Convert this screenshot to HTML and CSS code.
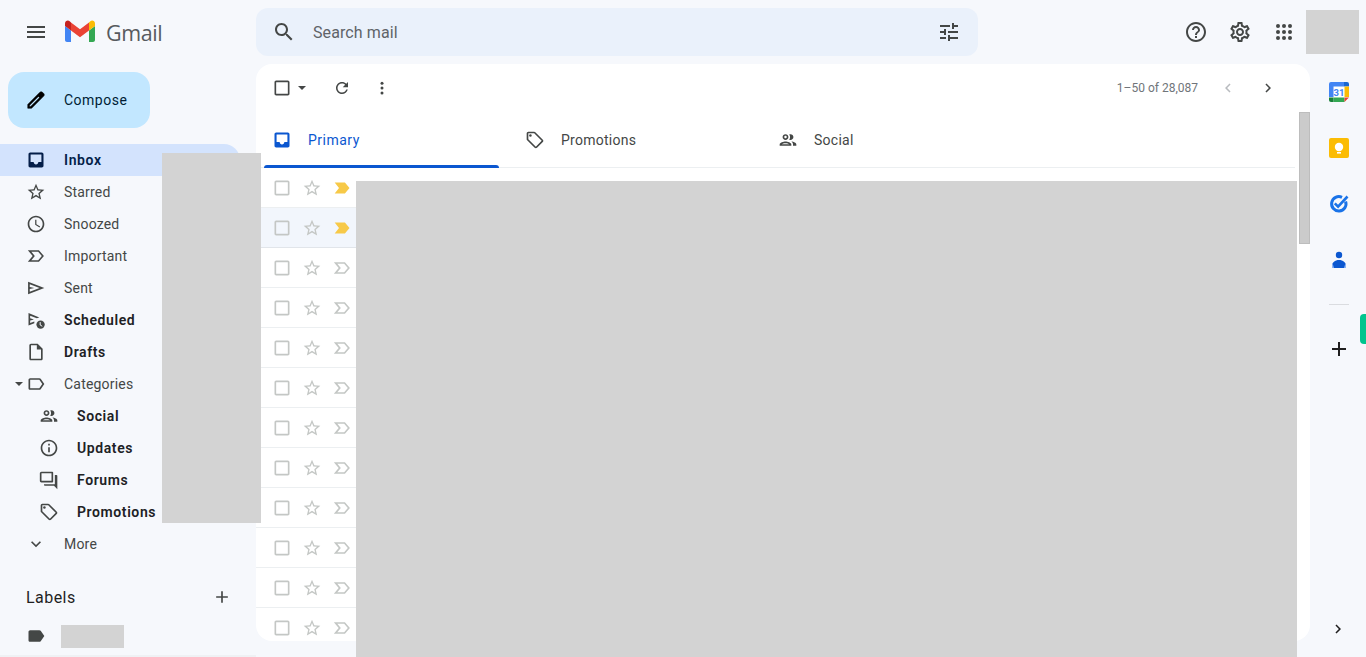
FILE: index.html
```html
<!DOCTYPE html>
<html lang="en">
<head>
  <meta charset="UTF-8">
  <meta name="viewport" content="width=device-width, initial-scale=1.0">
  <title>Inbox - Gmail</title>
  <link rel="stylesheet" href="styles.css">
</head>
<body>
  <svg class="defs" width="0" height="0">
    <symbol id="i-inbox" viewBox="0 0 24 24"><path d="M19 3H5c-1.1 0-2 .9-2 2v14c0 1.1.9 2 2 2h14c1.1 0 2-.9 2-2V5c0-1.1-.9-2-2-2zm-.5 11.500h-3.700c0 1.500-1.300 2.800-2.800 2.800s-2.800-1.300-2.800-2.800H5.500v-9h13v9z"/></symbol>
    <symbol id="i-star" viewBox="0 0 24 24"><path d="M22 9.24l-7.19-.62L12 2 9.19 8.63 2 9.24l5.46 4.73L5.82 21 12 17.27 18.18 21l-1.63-7.03L22 9.24zM12 15.4l-3.76 2.27 1-4.28-3.32-2.88 4.38-.38L12 6.1l1.71 4.04 4.38.38-3.32 2.88 1 4.28L12 15.4z"/></symbol>
    <symbol id="i-clock" viewBox="0 0 24 24"><path d="M11.99 2C6.47 2 2 6.48 2 12s4.47 10 9.99 10C17.52 22 22 17.52 22 12S17.52 2 11.99 2zM12 20c-4.42 0-8-3.58-8-8s3.58-8 8-8 8 3.58 8 8-3.58 8-8 8zm.5-13H11v6l5.25 3.15.75-1.23-4.5-2.67V7z"/></symbol>
    <symbol id="i-important" viewBox="0 0 24 24"><path d="M15.5 5H2.2L8 12l-5.800 7h13.300L21.500 12z M6.400 17L10.600 12 6.400 7h8.200L19 12l-4.400 5z" fill-rule="evenodd"/></symbol>
    <symbol id="i-sent" viewBox="0 0 24 24"><path d="M2.500 4.500v15L22 12 2.500 4.500zm2 3l11.800 4.500-11.800 4.500v-3.200l5.500-1.300-5.500-1.300V7.500z" fill-rule="evenodd"/></symbol>
    <symbol id="i-file" viewBox="0 0 24 24"><path d="M14 2H6c-1.1 0-2 .9-2 2v16c0 1.1.9 2 2 2h12c1.1 0 2-.9 2-2V8l-6-6zm4 18H6V4h7v5h5v11z"/></symbol>
    <symbol id="i-label" viewBox="0 0 24 24"><path d="M17.63 5.84C17.27 5.33 16.67 5 16 5L5 5.01C3.9 5.01 3 5.9 3 7v10c0 1.1.9 1.99 2 1.99L16 19c.67 0 1.27-.33 1.63-.84L22 12l-4.37-6.16zM16 17H5V7h11l3.55 5L16 17z"/></symbol>
    <symbol id="i-people" viewBox="0 0 24 24"><path d="M9 13.75c-2.34 0-7 1.17-7 3.5V19h14v-1.75c0-2.33-4.66-3.5-7-3.5zM4.34 17c.84-.58 2.87-1.25 4.66-1.25s3.82.67 4.66 1.25H4.34zM9 12c1.93 0 3.5-1.57 3.5-3.5S10.93 5 9 5 5.5 6.57 5.5 8.5 7.07 12 9 12zm0-5c.83 0 1.5.67 1.5 1.5S9.83 10 9 10s-1.5-.67-1.5-1.5S8.17 7 9 7zm7.04 6.81c1.16.84 1.96 1.96 1.96 3.44V19h4v-1.75c0-2.02-3.5-3.17-5.96-3.44zM15 12c1.93 0 3.5-1.57 3.5-3.5S16.93 5 15 5c-.54 0-1.04.13-1.5.35.63.89 1 1.98 1 3.15s-.37 2.26-1 3.15c.46.22.96.35 1.5.35z"/></symbol>
    <symbol id="i-info" viewBox="0 0 24 24"><path d="M11 7h2v2h-2zm0 4h2v6h-2zm1-9C6.48 2 2 6.48 2 12s4.48 10 10 10 10-4.48 10-10S17.52 2 12 2zm0 18c-4.41 0-8-3.59-8-8s3.59-8 8-8 8 3.59 8 8-3.59 8-8 8z"/></symbol>
    <symbol id="i-forum" viewBox="0 0 24 24"><path d="M15 4v9H3V4h12m1-2H3c-1.100 0-2 .9-2 2v9c0 1.100.9 2 2 2h13c.55 0 1-.45 1-1V3c0-.55-.45-1-1-1zm5 4h-2v11H6v1c0 .55.45 1 1 1h11l4 4V7c0-.55-.45-1-1-1z"/></symbol>
    <symbol id="i-tag" viewBox="0 0 24 24"><path d="M21.41 11.58l-9-9C12.05 2.22 11.55 2 11 2H4c-1.1 0-2 .9-2 2v7c0 .55.22 1.05.59 1.42l9 9c.36.36.86.58 1.41.58s1.05-.22 1.41-.59l7-7c.37-.36.59-.86.59-1.41s-.23-1.06-.59-1.42zM13 20.01L4 11V4h7v-.01l9 9-7 7.02z"/><circle cx="6.5" cy="6.5" r="1.5"/></symbol>
    <symbol id="i-check" viewBox="0 0 24 24"><path d="M19 5v14H5V5h14m0-2H5c-1.1 0-2 .9-2 2v14c0 1.1.9 2 2 2h14c1.1 0 2-.9 2-2V5c0-1.1-.9-2-2-2z"/></symbol>
    <symbol id="i-tagged" viewBox="0 0 24 24"><path d="M3.2 5.500h12.300L21 12l-5.500 6.500H3.200L8.400 12z"/></symbol>
  </svg>

  <div class="app">
    <aside class="sidebar">
      <div class="brand">
        <svg class="icon menu-btn" viewBox="0 0 24 24"><path d="M3 18h18v-2H3v2zm0-5h18v-2H3v2zm0-7v2h18V6H3z"/></svg>
        <svg class="gmail-logo" width="30" height="24" viewBox="0 0 30 24">
          <path fill="#4285f4" d="M2 22h4V10.500L0 6v14c0 1.100.9 2 2 2z"/>
          <path fill="#34a853" d="M24 22h4c1.100 0 2-.9 2-2V6l-6 4.500z"/>
          <path fill="#fbbc04" d="M24 2.500v8L30 6V3.500C30 1 27.200-.3 25.300 1.200z"/>
          <path fill="#ea4335" d="M6 10.500v-8L15 9.300l9-6.800v8l-9 6.700z"/>
          <path fill="#c5221f" d="M0 3.500V6l6 4.500v-8L4.700 1.200C2.800-.3 0 1 0 3.500z"/>
        </svg>
        <span class="wordmark">Gmail</span>
      </div>

      <button class="compose">
        <svg class="icon" viewBox="0 0 24 24"><path d="M20.410 4.940l-1.350-1.350c-.78-.78-2.050-.78-2.830 0L3 16.820V21h4.180L20.410 7.770c.79-.78.79-2.050 0-2.830zM6.290 19H5v-1.290l9.550-9.550 1.290 1.290L6.290 19z"/></svg>
        <span>Compose</span>
      </button>

      <nav class="nav">
        <a class="nav-item active bold"><svg class="icon"><use href="#i-inbox"/></svg><span>Inbox</span></a>
        <a class="nav-item"><svg class="icon"><use href="#i-star"/></svg><span>Starred</span></a>
        <a class="nav-item"><svg class="icon"><use href="#i-clock"/></svg><span>Snoozed</span></a>
        <a class="nav-item"><svg class="icon"><use href="#i-important"/></svg><span>Important</span></a>
        <a class="nav-item"><svg class="icon"><use href="#i-sent"/></svg><span>Sent</span></a>
        <a class="nav-item bold">
          <svg class="icon" viewBox="0 0 24 24"><path d="M3 3.500v15l7-2.700v-2.100L5 15.500v-3l4.500-1.200L5 10V6.800l8 3.100 3-1z" fill-rule="evenodd"/><circle cx="17.500" cy="17.500" r="5"/><path d="M17 14.500V18l2.500 1.500" fill="none" stroke="#f6f8fc" stroke-width="1.200"/></svg>
          <span>Scheduled</span>
        </a>
        <a class="nav-item bold"><svg class="icon"><use href="#i-file"/></svg><span>Drafts</span></a>
        <a class="nav-item">
          <i class="caret"></i>
          <svg class="icon"><use href="#i-label"/></svg><span>Categories</span>
        </a>
        <a class="nav-item sub bold"><svg class="icon"><use href="#i-people"/></svg><span>Social</span></a>
        <a class="nav-item sub bold"><svg class="icon"><use href="#i-info"/></svg><span>Updates</span></a>
        <a class="nav-item sub bold"><svg class="icon"><use href="#i-forum"/></svg><span>Forums</span></a>
        <a class="nav-item sub bold"><svg class="icon"><use href="#i-tag"/></svg><span>Promotions</span></a>
        <a class="nav-item">
          <svg class="icon" viewBox="0 0 24 24"><path d="M16.590 8.590L12 13.170 7.410 8.590 6 10l6 6 6-6z"/></svg>
          <span>More</span>
        </a>
      </nav>

      <div class="labels-head">
        <span>Labels</span>
        <svg class="icon" viewBox="0 0 24 24"><path d="M19 13h-6v6h-2v-6H5v-2h6V5h2v6h6v2z"/></svg>
      </div>
      <div class="label-row">
        <svg class="icon" viewBox="0 0 24 24"><path d="M17.630 5.840C17.270 5.330 16.670 5 16 5L5 5.010C3.900 5.010 3 5.900 3 7v10c0 1.100.9 1.990 2 1.990L16 19c.67 0 1.270-.33 1.630-.84L22 12l-4.370-6.160z"/></svg>
      </div>
    </aside>

    <div class="center">
      <header class="topbar">
        <div class="search">
          <svg class="icon" viewBox="0 0 24 24"><path d="M15.500 14h-.79l-.28-.27C15.410 12.590 16 11.110 16 9.500 16 5.910 13.090 3 9.500 3S3 5.910 3 9.500 5.910 16 9.500 16c1.610 0 3.090-.59 4.230-1.570l.27.28v.79l5 4.990L20.490 19l-4.990-5zm-6 0C7.010 14 5 11.990 5 9.500S7.010 5 9.500 5 14 7.010 14 9.500 11.990 14 9.500 14z"/></svg>
          <span class="search-text">Search mail</span>
          <svg class="icon" viewBox="0 0 24 24"><path d="M3 17v2h6v-2H3zM3 5v2h10V5H3zm10 16v-2h8v-2h-8v-2h-2v6h2zM7 9v2H3v2h4v2h2V9H7zm14 4v-2H11v2h10zm-6-4h2V7h4V5h-4V3h-2v6z"/></svg>
        </div>
        <div class="top-actions">
          <svg class="icon" viewBox="0 0 24 24"><path d="M11 18h2v-2h-2v2zm1-16C6.480 2 2 6.480 2 12s4.480 10 10 10 10-4.480 10-10S17.520 2 12 2zm0 18c-4.410 0-8-3.590-8-8s3.590-8 8-8 8 3.590 8 8-3.590 8-8 8zm0-14c-2.210 0-4 1.790-4 4h2c0-1.100.9-2 2-2s2 .9 2 2c0 2-3 1.750-3 5h2c0-2.250 3-2.500 3-5 0-2.210-1.790-4-4-4z"/></svg>
          <svg class="icon" viewBox="0 0 24 24"><path d="M19.430 12.980c.04-.32.07-.64.07-.98 0-.34-.03-.66-.07-.98l2.110-1.650c.19-.15.24-.42.12-.64l-2-3.460c-.09-.16-.26-.25-.44-.25-.06 0-.12.01-.17.03l-2.490 1c-.52-.4-1.080-.73-1.690-.98l-.38-2.650C14.460 2.180 14.250 2 14 2h-4c-.25 0-.46.18-.49.42l-.38 2.650c-.61.25-1.170.59-1.690.98l-2.490-1c-.06-.02-.12-.03-.18-.03-.17 0-.34.09-.43.25l-2 3.460c-.13.22-.07.49.12.64l2.110 1.650c-.04.32-.07.65-.07.98 0 .33.03.66.07.98l-2.110 1.650c-.19.15-.24.42-.12.64l2 3.460c.09.16.26.25.44.25.06 0 .12-.01.17-.03l2.490-1c.52.4 1.080.73 1.690.98l.38 2.650c.03.24.24.42.49.42h4c.25 0 .46-.18.49-.42l.38-2.650c.61-.25 1.170-.59 1.690-.98l2.490 1c.06.02.12.03.18.03.17 0 .34-.09.43-.25l2-3.460c.12-.22.07-.49-.12-.64l-2.110-1.650zm-1.980-1.710c.04.31.05.52.05.73 0 .21-.02.43-.05.73l-.14 1.130.89.7 1.080.84-.7 1.210-1.270-.51-1.040-.42-.9.68c-.43.32-.84.56-1.250.73l-1.060.43-.16 1.130-.2 1.350h-1.400l-.19-1.350-.16-1.130-1.060-.43c-.43-.18-.83-.41-1.230-.71l-.91-.7-1.060.43-1.270.51-.7-1.210 1.080-.84.89-.7-.14-1.130c-.03-.31-.05-.54-.05-.74s.02-.43.05-.73l.14-1.130-.89-.7-1.080-.84.7-1.210 1.270.51 1.040.42.9-.68c.43-.32.84-.56 1.250-.73l1.060-.43.16-1.130.2-1.350h1.390l.19 1.350.16 1.130 1.060.43c.43.18.83.41 1.230.71l.91.7 1.060-.43 1.270-.51.7 1.210-1.070.85-.89.7.14 1.130zM12 8c-2.210 0-4 1.790-4 4s1.790 4 4 4 4-1.790 4-4-1.790-4-4-4zm0 6c-1.100 0-2-.9-2-2s.9-2 2-2 2 .9 2 2-.9 2-2 2z"/></svg>
          <svg class="icon" viewBox="0 0 24 24"><circle cx="6" cy="6" r="2"/><circle cx="12" cy="6" r="2"/><circle cx="18" cy="6" r="2"/><circle cx="6" cy="12" r="2"/><circle cx="12" cy="12" r="2"/><circle cx="18" cy="12" r="2"/><circle cx="6" cy="18" r="2"/><circle cx="12" cy="18" r="2"/><circle cx="18" cy="18" r="2"/></svg>
        </div>
      </header>

      <main class="panel">
        <div class="toolbar">
          <svg class="icon"><use href="#i-check"/></svg>
          <i class="caret toolbar-caret"></i>
          <svg class="icon small refresh" viewBox="0 0 24 24"><path d="M17.650 6.350C16.200 4.900 14.210 4 12 4c-4.420 0-7.990 3.580-7.990 8s3.570 8 7.990 8c3.730 0 6.840-2.550 7.730-6h-2.080c-.82 2.330-3.040 4-5.650 4-3.310 0-6-2.690-6-6s2.690-6 6-6c1.660 0 3.140.69 4.220 1.780L13 11h7V4l-2.350 2.350z"/></svg>
          <svg class="icon small more" viewBox="0 0 24 24"><circle cx="12" cy="5.500" r="2"/><circle cx="12" cy="12" r="2"/><circle cx="12" cy="18.500" r="2"/></svg>
          <div class="pager">
            <span>1–50 of 28,087</span>
            <svg class="icon small disabled" viewBox="0 0 24 24"><path d="M15.410 7.410L14 6l-6 6 6 6 1.410-1.410L10.830 12z"/></svg>
            <svg class="icon small" viewBox="0 0 24 24"><path d="M10 6L8.590 7.410 13.170 12l-4.580 4.590L10 18l6-6z"/></svg>
          </div>
        </div>

        <div class="tabs">
          <div class="tab selected"><svg class="icon"><use href="#i-inbox"/></svg><span>Primary</span></div>
          <div class="tab"><svg class="icon"><use href="#i-tag"/></svg><span>Promotions</span></div>
          <div class="tab"><svg class="icon"><use href="#i-people"/></svg><span>Social</span></div>
        </div>

        <div class="rows">
          <div class="row"><svg class="icon"><use href="#i-check"/></svg><svg class="icon"><use href="#i-star"/></svg><svg class="icon tagged"><use href="#i-tagged"/></svg></div>
          <div class="row hover"><svg class="icon"><use href="#i-check"/></svg><svg class="icon"><use href="#i-star"/></svg><svg class="icon tagged"><use href="#i-tagged"/></svg></div>
          <div class="row"><svg class="icon"><use href="#i-check"/></svg><svg class="icon"><use href="#i-star"/></svg><svg class="icon"><use href="#i-important"/></svg></div>
          <div class="row"><svg class="icon"><use href="#i-check"/></svg><svg class="icon"><use href="#i-star"/></svg><svg class="icon"><use href="#i-important"/></svg></div>
          <div class="row"><svg class="icon"><use href="#i-check"/></svg><svg class="icon"><use href="#i-star"/></svg><svg class="icon"><use href="#i-important"/></svg></div>
          <div class="row"><svg class="icon"><use href="#i-check"/></svg><svg class="icon"><use href="#i-star"/></svg><svg class="icon"><use href="#i-important"/></svg></div>
          <div class="row"><svg class="icon"><use href="#i-check"/></svg><svg class="icon"><use href="#i-star"/></svg><svg class="icon"><use href="#i-important"/></svg></div>
          <div class="row"><svg class="icon"><use href="#i-check"/></svg><svg class="icon"><use href="#i-star"/></svg><svg class="icon"><use href="#i-important"/></svg></div>
          <div class="row"><svg class="icon"><use href="#i-check"/></svg><svg class="icon"><use href="#i-star"/></svg><svg class="icon"><use href="#i-important"/></svg></div>
          <div class="row"><svg class="icon"><use href="#i-check"/></svg><svg class="icon"><use href="#i-star"/></svg><svg class="icon"><use href="#i-important"/></svg></div>
          <div class="row"><svg class="icon"><use href="#i-check"/></svg><svg class="icon"><use href="#i-star"/></svg><svg class="icon"><use href="#i-important"/></svg></div>
          <div class="row"><svg class="icon"><use href="#i-check"/></svg><svg class="icon"><use href="#i-star"/></svg><svg class="icon"><use href="#i-important"/></svg></div>
        </div>

        <div class="scroll-thumb"></div>
      </main>
    </div>

    <aside class="addons">
      <svg class="addon" viewBox="0 0 20 20">
        <rect x="1" y="1" width="18" height="18" rx="1.500" fill="#fff"/>
        <path fill="#4285f4" d="M2 0h13v4.500H4.500V15H0V2a2 2 0 0 1 2-2z"/>
        <path fill="#1967d2" d="M15 0h3a2 2 0 0 1 2 2v2.500h-5z"/>
        <path fill="#fbbc04" d="M15.500 4.500H20V15h-4.500z"/>
        <path fill="#34a853" d="M4.500 15.500H15.500V20H4.500z"/>
        <path fill="#188038" d="M0 15.500h4.500V20H2a2 2 0 0 1-2-2z"/>
        <path fill="#ea4335" d="M15.500 15.500H20L15.500 20z"/>
        <text x="10" y="13.500" text-anchor="middle" class="cal-num">31</text>
      </svg>
      <svg class="addon" viewBox="0 0 20 20">
        <rect width="20" height="20" rx="2" fill="#fbbc04"/>
        <circle cx="10" cy="9" r="4.200" fill="#fff"/>
        <rect x="8" y="14" width="4" height="1.600" fill="#fff"/>
      </svg>
      <svg class="addon" viewBox="0 0 20 20">
        <path fill="none" stroke="#1a73e8" stroke-width="3" d="M16.600 7.500A7.200 7.200 0 1 1 13 3.400"/>
        <path fill="none" stroke="#1a73e8" stroke-width="2.600" d="M5.800 9.300l3.300 3.300L18.500 2.500"/>
      </svg>
      <svg class="addon" viewBox="0 0 20 20">
        <circle cx="10" cy="5" r="3.200" fill="#0b57d0"/>
        <path fill="#0b57d0" d="M3 18v-2.500C3 12.500 6 10 10 10s7 2.500 7 5.500V18z"/>
        <path fill="#8ab4f8" d="M3 18v-2.500c0-.8.2-1.500.6-2.200L5 18zM17 18v-2.500c0-.8-.2-1.500-.6-2.200L15 18z"/>
      </svg>
      <div class="addon-sep"></div>
      <svg class="icon plus" viewBox="0 0 24 24"><path d="M19 13h-6v6h-2v-6H5v-2h6V5h2v6h6v2z"/></svg>
      <svg class="icon expand" viewBox="0 0 24 24"><path d="M10 6L8.590 7.410 13.170 12l-4.580 4.590L10 18l6-6z"/></svg>
      <div class="addon-pill"></div>
    </aside>
  </div>

  <!-- grey blocks over private content -->
  <div class="mask mask-counts"></div>
  <div class="mask mask-list"></div>
  <div class="mask mask-avatar"></div>
  <div class="mask mask-label"></div>
</body>
</html>
```

FILE: styles.css
```css
* {
  box-sizing: border-box;
}

html, body {
  height: 100%;
}

body {
  margin: 0;
  overflow: hidden;
  font-family: Roboto, "Liberation Sans", sans-serif;
  background-color: #f6f8fc;
  color: #444746;
}

.defs {
  position: absolute;
}

.icon {
  width: 20px;
  height: 20px;
  flex: none;
  fill: #444746;
}

.app {
  display: flex;
  height: 657px;
}

/* left column */
.sidebar {
  width: 256px;
  flex: none;
  border-bottom: 2px solid #eff1f4;
}

.brand {
  display: flex;
  align-items: center;
  height: 64px;
  padding-left: 24px;
}

.menu-btn {
  width: 24px;
  height: 24px;
}

.gmail-logo {
  margin-left: 17px;
}

.wordmark {
  margin-left: 11px;
  font-family: "Open Sans", Roboto, sans-serif;
  font-size: 21.5px;
  letter-spacing: -0.4px;
  color: #565a5e;
}

.compose {
  display: flex;
  align-items: center;
  gap: 17px;
  width: 142px;
  height: 56px;
  margin: 8px 0 16px 8px;
  padding: 0 0 0 17px;
  border: none;
  border-radius: 16px;
  background-color: #c2e7ff;
  font-family: inherit;
  font-size: 14px;
  font-weight: 400;
  letter-spacing: 0.5px;
  color: #001d35;
}

.compose .icon {
  width: 22px;
  height: 22px;
  fill: #000;
  stroke: #000;
  stroke-width: 0.6;
}

.nav-item {
  position: relative;
  display: flex;
  align-items: center;
  gap: 18px;
  height: 32px;
  width: 240px;
  padding-left: 26px;
  font-size: 14px;
  letter-spacing: 0.2px;
  color: #444746;
}

.nav-item.active {
  background-color: #d3e3fd;
  border-radius: 0 16px 16px 0;
}

.nav-item.active .icon {
  fill: #041e49;
}

.nav-item.bold {
  font-weight: 600;
  letter-spacing: 0.6px;
  color: #202124;
}

.nav-item.active.bold {
  color: #041e49;
}

.nav-item.sub {
  padding-left: 39px;
}

.caret {
  position: absolute;
  left: 15px;
  top: 14px;
  border: 4px solid transparent;
  border-top-color: #444746;
  border-bottom: none;
}

.labels-head {
  display: flex;
  align-items: center;
  justify-content: space-between;
  width: 240px;
  height: 24px;
  margin-top: 25px;
  padding: 0 8px 0 26px;
  font-size: 16px;
  letter-spacing: 0.45px;
  color: #1f1f1f;
}

.label-row {
  display: flex;
  align-items: center;
  height: 32px;
  margin-top: 11px;
  padding-left: 26px;
}

/* top bar */
.center {
  flex: 1;
  min-width: 0;
  display: flex;
  flex-direction: column;
}

.topbar {
  display: flex;
  align-items: center;
  height: 64px;
  flex: none;
}

.search {
  display: flex;
  align-items: center;
  width: 722px;
  height: 48px;
  padding: 0 17px 0 16px;
  border-radius: 12px;
  background-color: #eaf1fb;
}

.search .icon {
  width: 24px;
  height: 24px;
}

.search-text {
  flex: 1;
  margin-left: 17px;
  font-size: 16px;
  letter-spacing: 0.1px;
  color: #5f6368;
}

.top-actions {
  display: flex;
  align-items: center;
  gap: 20px;
  margin-left: auto;
  margin-right: 14px;
}

.top-actions .icon {
  width: 24px;
  height: 24px;
}

/* mail panel */
.panel {
  position: relative;
  height: 577px;
  flex: none;
  border-radius: 16px;
  background-color: #fff;
  overflow: hidden;
}

.toolbar {
  display: flex;
  align-items: center;
  height: 48px;
  padding: 0 33px 0 16px;
}

.toolbar-caret {
  position: static;
  margin-left: 6px;
}

.icon.small {
  width: 18px;
  height: 18px;
}

.refresh {
  margin-left: 27px;
}

.more {
  margin-left: 22px;
}

.pager {
  display: flex;
  align-items: center;
  margin-left: auto;
  font-size: 12px;
  color: #70757a;
}

.pager .disabled {
  margin: 0 22px 0 21px;
  fill: #b8bbbf;
}

.tabs {
  display: flex;
  height: 56px;
  width: 1039px;
  border-bottom: 1px solid #eceff1;
}

.tab {
  display: flex;
  align-items: center;
  gap: 16px;
  width: 253px;
  padding-left: 16px;
  font-size: 14px;
  letter-spacing: 0.25px;
  color: #444746;
}

.tab.selected {
  position: relative;
  letter-spacing: 0.5px;
  color: #0b57d0;
}

.tab.selected .icon {
  fill: #0b57d0;
}

.tab.selected::after {
  content: "";
  position: absolute;
  left: 8px;
  right: 10px;
  bottom: -1px;
  height: 3px;
  border-radius: 3px 3px 0 0;
  background-color: #0b57d0;
}

.rows {
  width: 100px;
}

.row {
  display: flex;
  align-items: center;
  gap: 10px;
  height: 40px;
  padding-left: 16px;
  border-bottom: 1px solid #eceff1;
}

.row .icon {
  fill: #c4c7c5;
}

.row .icon.tagged {
  fill: #f7c948;
}

.row.hover {
  background-color: #f2f6fc;
  border-bottom-color: #e1e5ea;
}

.scroll-thumb {
  position: absolute;
  top: 48px;
  right: 0;
  width: 11px;
  height: 132px;
  background-color: #cbcbcb;
  border: 1px solid #bdbdbd;
}

/* right column */
.addons {
  position: relative;
  display: flex;
  flex-direction: column;
  align-items: center;
  width: 56px;
  flex: none;
  padding: 82px 0 0 2px;
}

.addon {
  width: 20px;
  height: 20px;
  margin-bottom: 36px;
}

.cal-num {
  font-family: Roboto, sans-serif;
  font-size: 9.5px;
  font-weight: 700;
  fill: #4285f4;
}

.addon-sep {
  width: 20px;
  height: 1px;
  margin-top: -2px;
  background-color: #dadce0;
}

.plus {
  width: 24px;
  height: 24px;
  margin-top: 32px;
  fill: #1f1f1f;
}

.expand {
  position: absolute;
  left: 19px;
  bottom: 19px;
  width: 18px;
  height: 18px;
  fill: #1f1f1f;
}

.addon-pill {
  position: absolute;
  top: 314px;
  right: 0;
  width: 6px;
  height: 30px;
  border-radius: 4px 0 0 4px;
  background-color: #00c58e;
}

/* masks */
.mask {
  position: absolute;
  background-color: #d3d3d3;
}

.mask-counts {
  left: 162px;
  top: 153px;
  width: 99px;
  height: 370px;
}

.mask-list {
  left: 356px;
  top: 181px;
  width: 941px;
  height: 476px;
}

.mask-avatar {
  left: 1306px;
  top: 10px;
  width: 53px;
  height: 44px;
}

.mask-label {
  left: 61px;
  top: 625px;
  width: 63px;
  height: 23px;
}
```
